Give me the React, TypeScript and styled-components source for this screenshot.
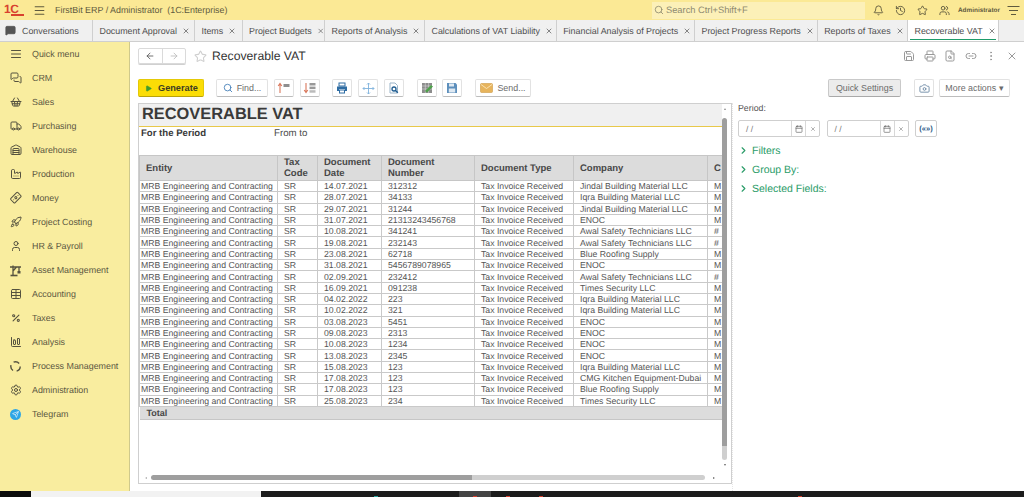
import { ReactNode } from "react";
import styled, { createGlobalStyle } from "styled-components";
import {
    AlignJustify,
    ArrowLeft,
    ArrowRight,
    Banknote,
    Bell,
    Calendar,
    Camera,
    ChartColumnBig,
    ChevronRight,
    Factory,
    FileSearch,
    History,
    Link2,
    Menu,
    MessageSquare,
    MessagesSquare,
    MoreVertical,
    Percent,
    Play,
    Printer,
    Rocket,
    Save,
    Search,
    Send,
    Settings,
    ShoppingBasket,
    Star,
    Table,
    Truck,
    User,
    Users,
    Warehouse,
    X,
} from "lucide-react";

const GlobalStyle = createGlobalStyle`
    html, body {
        margin: 0;
        padding: 0;
        background: #fff;
    }
    body {
        font-family: "Liberation Sans", Arial, sans-serif;
        color: #4b4b4b;
        text-rendering: geometricPrecision;
    }
    * {
        box-sizing: border-box;
    }
`;

const Page = styled.div`
    display: flex;
    flex-direction: column;
    width: 1024px;
    height: 497px;
    overflow: hidden;
`;

const Header = styled.header`
    display: flex;
    align-items: center;
    height: 20px;
    flex: none;
    background: #fbe995;
    color: #5f5a3e;
`;

const LogoText = styled.span`
    position: relative;
    width: 20px;
    height: 12px;
    margin: 0 4px;
    font-size: 12px;
    font-weight: 700;
    line-height: 10px;
    letter-spacing: -0.5px;
    color: #d8412f;

    &::after {
        content: "";
        position: absolute;
        left: 7px;
        right: 0;
        bottom: 0;
        height: 2px;
        background: #d8412f;
    }
`;

const HeaderIcon = styled.span<{ $left?: number }>`
    display: flex;
    align-items: center;
    justify-content: center;
    width: 22px;
    margin-left: ${(p) => p.$left ?? 0}px;
    color: #5f5a3e;
`;

const AppName = styled.span`
    width: 597px;
    margin-left: 5px;
    font-size: 8.9px;
`;

const SearchBox = styled.div`
    display: flex;
    align-items: center;
    gap: 2px;
    width: 213px;
    height: 17px;
    padding-left: 2px;
    background: #fcf0b8;
    font-size: 9.3px;
    color: #8e8a70;
`;

const UserName = styled.span`
    width: 41px;
    margin: 0 3px;
    font-size: 6.4px;
    font-weight: 700;
    white-space: nowrap;
`;

const TabBar = styled.nav`
    display: flex;
    height: 22px;
    flex: none;
    background: #f0f0f0;
    border-bottom: 1px solid #cfcfcf;
    overflow: hidden;
`;

const Tab = styled.div<{ $active?: boolean; $width: number }>`
    position: relative;
    display: flex;
    align-items: center;
    gap: 5px;
    flex: none;
    width: ${(p) => p.$width}px;
    padding-left: 6.5px;
    border-right: 1px solid #cfcfcf;
    background: ${(p) => (p.$active ? "#fff" : "#f0f0f0")};
    font-size: 8.9px;
    white-space: nowrap;
    color: #4f4f4f;

    &::after {
        content: "";
        display: ${(p) => (p.$active ? "block" : "none")};
        position: absolute;
        left: 2px;
        right: 2px;
        bottom: 1px;
        height: 1px;
        background: #1e9c6a;
    }
`;

const ConvTab = styled(Tab)`
    gap: 6px;
    padding-left: 5px;
`;

const Body = styled.div`
    display: flex;
    flex: 1;
    min-height: 0;
`;

const Sidebar = styled.aside`
    display: flex;
    flex-direction: column;
    width: 130px;
    flex: none;
    background: #f9ed9f;
    border-right: 1px solid #cfc98c;
`;

const SideItem = styled.div`
    display: flex;
    align-items: center;
    height: 24px;
    padding-left: 9px;
    gap: 10px;
    font-size: 8.9px;
    color: #5b5741;
`;

const SideIcon = styled.span<{ $tilt?: boolean }>`
    display: flex;
    justify-content: center;
    width: 13px;
    color: #55523f;
    transform: ${(p) => (p.$tilt ? "rotate(-45deg)" : "none")};
`;

const TelegramDot = styled.span`
    display: flex;
    align-items: center;
    justify-content: center;
    width: 11px;
    height: 11px;
    border-radius: 50%;
    background: #2ea6e6;
    color: #fff;
`;

const Main = styled.main`
    display: flex;
    flex-direction: column;
    flex: 1;
    min-width: 0;
    padding: 6px 0 0 8px;
`;

const TitleRow = styled.div`
    display: flex;
    align-items: center;
    height: 16px;
`;

const NavGroup = styled.div`
    display: flex;
    width: 48px;
    height: 16px;
    border: 1px solid #dadada;
    border-radius: 2px;
    box-shadow: 0 1px 0 #d0d0d0;
`;

const NavCell = styled.span<{ $muted?: boolean }>`
    display: flex;
    flex: 1;
    align-items: center;
    justify-content: center;
    color: ${(p) => (p.$muted ? "#b9b9b9" : "#555")};

    & + & {
        border-left: 1px solid #dadada;
    }
`;

const FavStar = styled.span`
    display: flex;
    margin: 0 5px 0 8px;
    color: #cfcfcf;
`;

const Title = styled.h1`
    width: 691px;
    margin: 0;
    font-size: 12.2px;
    font-weight: 400;
    color: #333;
`;

const TitleTools = styled.div`
    display: flex;
    align-items: center;
    gap: 8.5px;
    color: #999;
`;

const Toolbar = styled.div`
    display: flex;
    align-items: center;
    height: 18px;
    flex: none;
    margin-top: 15px;
    padding-right: 14px;
`;

const Btn = styled.button<{ $width: number; $left?: number }>`
    display: flex;
    align-items: center;
    justify-content: center;
    gap: 4px;
    flex: none;
    width: ${(p) => p.$width}px;
    height: 18px;
    margin: 0 0 0 ${(p) => p.$left ?? 6}px;
    padding: 0;
    border: 1px solid #e2e2e2;
    border-bottom-color: #bdbdbd;
    border-radius: 2px;
    background: #fff;
    font-family: inherit;
    font-size: 8.9px;
    color: #6b6b6b;
`;

const GenerateBtn = styled(Btn)`
    justify-content: flex-start;
    gap: 6px;
    padding-left: 6px;
    background: #fbdd06;
    border-color: #e4c908;
    border-bottom-color: #b9a20a;
    font-size: 9.2px;
    font-weight: 700;
    color: #3d3d22;
`;

const QuickBtn = styled(Btn)`
    background: #ececec;
    border-color: #c9c9c9;
    border-bottom-color: #a9a9a9;
`;

const Spacer = styled.div`
    flex: 1;
`;

const Workspace = styled.div`
    display: flex;
    flex: 1;
    min-height: 0;
    margin-top: 6px;
`;

const Report = styled.section`
    display: flex;
    flex-direction: column;
    flex: none;
    width: 594px;
    height: 381px;
    border: 1px solid #cfcfcf;
`;

const ReportMain = styled.div`
    display: flex;
    flex: 1;
    min-height: 0;
`;

const Sheet = styled.div`
    width: 583px;
    flex: none;
    overflow: hidden;
`;

const SheetTitle = styled.div`
    height: 23px;
    padding-left: 3px;
    background: #f0f0f0;
    border-bottom: 1px solid #e8c84a;
    font-size: 16.4px;
    line-height: 21px;
    font-weight: 700;
    color: #3a3a3a;
`;

const PeriodRow = styled.div`
    display: flex;
    align-items: center;
    height: 28px;
    padding: 0 0 16px 2px;
    font-size: 9.7px;
`;

const PeriodLabel = styled.b`
    width: 133px;
    font-size: 9.6px;
    color: #3a3a3a;
`;

const DataTable = styled.table`
    table-layout: fixed;
    width: 583px;
    border-collapse: collapse;
    font-size: 8.7px;
`;

const HeadCell = styled.th`
    height: 25px;
    padding: 0 12px 0 6px;
    background: #dcdcdc;
    border: 1px solid #c6c6c6;
    text-align: left;
    font-size: 9.5px;
    line-height: 11px;
    font-weight: 700;
    color: #484848;
`;

const Cell = styled.td`
    height: 11.3px;
    padding: 0 0 0 6px;
    border: 1px solid #c9c9c9;
    line-height: 10px;
    white-space: nowrap;
    overflow: hidden;
    color: #555;
`;

const EntityCell = styled(Cell)`
    padding-left: 1px;
`;

const TotalCell = styled.td`
    height: 13px;
    padding: 0 0 0 7px;
    background: #dcdcdc;
    border-bottom: 1px solid #c6c6c6;
    font-size: 9px;
    font-weight: 700;
    line-height: 10px;
    color: #484848;
`;

const VTrack = styled.div`
    display: flex;
    flex-direction: column;
    align-items: center;
    width: 5px;
    flex: none;
    padding-top: 4px;
`;

const VBar = styled.div`
    width: 5px;
    height: 342px;
    margin: 8px 0 4px;
    border-radius: 3px;
    background: linear-gradient(#9e9e9e 0, #9e9e9e 96%, #cfcfcf 96%, #cfcfcf 100%);
`;

const HTrack = styled.div`
    display: flex;
    align-items: center;
    gap: 4px;
    height: 9px;
    flex: none;
    padding: 0 0 2px 6px;
`;

const HBar = styled.div`
    width: 554px;
    height: 5px;
    border-radius: 3px;
    background: linear-gradient(90deg, #9e9e9e 0, #9e9e9e 58%, #cfcfcf 58%, #cfcfcf 100%);
`;

const ArrowUp = styled.span`
    flex: none;
    border-left: 1.5px solid transparent;
    border-right: 1.5px solid transparent;
    border-bottom: 2px solid #8a8a8a;
`;

const ArrowDown = styled.span`
    flex: none;
    border-left: 1.5px solid transparent;
    border-right: 1.5px solid transparent;
    border-top: 2px solid #666;
`;

const ArrowBack = styled.span`
    flex: none;
    border-top: 1.5px solid transparent;
    border-bottom: 1.5px solid transparent;
    border-right: 2px solid #aaa;
`;

const ArrowForward = styled.span`
    flex: none;
    margin-left: 4px;
    border-top: 1.5px solid transparent;
    border-bottom: 1.5px solid transparent;
    border-left: 2px solid #666;
`;

const FilterPane = styled.aside`
    flex: 1;
    padding-left: 5px;
    border-left: 1px dotted #e6e6e6;
`;

const PeriodCaption = styled.div`
    height: 17px;
    font-size: 8.8px;
    line-height: 11px;
    color: #555;
`;

const DateRow = styled.div`
    display: flex;
    align-items: center;
    gap: 6.5px;
`;

const DateField = styled.div`
    display: flex;
    align-items: center;
    width: 82px;
    height: 17px;
    border: 1px solid #cfcfcf;
    border-radius: 2px;
    font-size: 8.5px;
    color: #777;
`;

const DateValue = styled.span`
    flex: 1;
    padding-left: 7px;
`;

const DateCell = styled.span`
    display: flex;
    align-items: center;
    justify-content: center;
    width: 14px;
    height: 100%;
    border-left: 1px solid #d8d8d8;
    color: #666;
`;

const PeriodBtn = styled.div`
    width: 22px;
    height: 17px;
    border: 1px solid #cfcfcf;
    border-radius: 2px;
    text-align: center;
    font-size: 7.5px;
    font-weight: 700;
    line-height: 15px;
    color: #2c5a86;
`;

const Section = styled.div`
    display: flex;
    align-items: center;
    height: 19px;
    gap: 3px;
    font-size: 10.5px;
    color: #2a9c68;
`;

const SectionList = styled.div`
    margin-top: 4px;
`;

const Taskbar = styled.footer`
    display: flex;
    height: 6px;
    flex: none;
    background: #1c1c1c;
    overflow: hidden;
`;

const TaskStart = styled.div`
    width: 31px;
    background: #0c0c0c;
`;

const TaskSearch = styled.div`
    width: 230px;
    background: #f2f2f2;
`;

const TaskDot = styled.span<{ $left: number; $color: string }>`
    align-self: flex-end;
    width: 4px;
    height: 1px;
    margin-left: ${(p) => p.$left}px;
    background: ${(p) => p.$color};
`;

const TaskActive = styled.div`
    display: flex;
    justify-content: center;
    width: 32px;
    margin-left: 81px;
    background: #444;
`;

const TaskClock = styled.div`
    margin-left: 148px;
    padding-top: 4px;
    font-size: 8.5px;
    line-height: 10px;
    white-space: nowrap;
    color: #eee;
`;

function SortUpIcon() {
    return (
        <svg width="14" height="12" viewBox="0 0 14 12">
            <path d="M3 11V2M1.2 4 3 1.5 4.8 4" fill="none" stroke="#d9785c" strokeWidth="1.1" />
            <rect x="6.5" y="2" width="6" height="3" fill="#8f8f8f" />
        </svg>
    );
}

function SortDownIcon() {
    return (
        <svg width="14" height="12" viewBox="0 0 14 12">
            <path d="M3 1v9M1.2 8 3 10.5 4.8 8" fill="none" stroke="#d9785c" strokeWidth="1.1" />
            <rect x="6.5" y="1" width="6" height="2.5" fill="#999" />
            <rect x="6.5" y="4.6" width="6" height="2.5" fill="#999" />
            <rect x="6.5" y="8.2" width="6" height="2.5" fill="#bbb" />
        </svg>
    );
}

function PrintIcon() {
    return (
        <svg width="12" height="12" viewBox="0 0 12 12">
            <rect x="3" y="1" width="6" height="3" fill="none" stroke="#2f6da3" />
            <path d="M1 4.5h10V9H9V7H3v2H1z" fill="#2f6da3" />
            <rect x="3.5" y="8" width="5" height="3" fill="none" stroke="#2f6da3" />
        </svg>
    );
}

function MoveIcon() {
    return (
        <svg width="13" height="13" viewBox="0 0 13 13" fill="none" stroke="#7fb2dc" strokeWidth="0.9">
            <path d="M6.5 1v11M1 6.5h11" />
            <path d="M5 2.5 6.5 1 8 2.5M5 10.5 6.5 12 8 10.5M2.5 5 1 6.5 2.5 8M10.5 5 12 6.5 10.5 8" />
        </svg>
    );
}

function PreviewIcon() {
    return (
        <svg width="12" height="12" viewBox="0 0 12 12" fill="none">
            <path d="M2 1h5l2.5 2.5V11H2z" stroke="#9bb4c9" />
            <circle cx="6" cy="7" r="2" stroke="#1f5d91" strokeWidth="1.3" />
            <path d="m7.5 8.5 2.3 2.3" stroke="#1f5d91" strokeWidth="1.4" />
        </svg>
    );
}

function TableEditIcon() {
    return (
        <svg width="13" height="12" viewBox="0 0 13 12">
            <rect x="1" y="1" width="10" height="10" fill="#8c8c8c" />
            <path d="M1 4h10M1 7h10M4.3 1v10M7.6 1v10" stroke="#d8d8d8" strokeWidth="0.6" />
            <path d="m4 9 6-6 2 1.5-6 6z" fill="#4ea24a" />
        </svg>
    );
}

function FloppyIcon() {
    return (
        <svg width="12" height="12" viewBox="0 0 12 12">
            <path d="M1 1h8.5L11 2.5V11H1z" fill="#5d8fbc" />
            <rect x="3" y="1.5" width="5" height="3" fill="#dfe9f2" />
            <rect x="2.8" y="6.5" width="6.4" height="4" fill="#dfe9f2" />
        </svg>
    );
}

function EnvelopeIcon() {
    return (
        <svg width="13" height="10" viewBox="0 0 13 10">
            <rect x="0.5" y="0.5" width="12" height="9" rx="1" fill="#e7b45c" stroke="#cf9a45" strokeWidth="0.6" />
            <path d="m1 1.5 5.5 4 5.5-4" fill="none" stroke="#fbe6bd" strokeWidth="0.9" />
        </svg>
    );
}

function MenuLines() {
    return (
        <svg width="13" height="11" viewBox="0 0 13 11" stroke="#5f5a3e" strokeWidth="1.1">
            <path d="M0.5 1.5h12M2 5.5h9M4 9.5h5" />
        </svg>
    );
}

function CraneIcon() {
    return (
        <svg width="13" height="13" viewBox="0 0 13 13" fill="none" stroke="#55523f" strokeWidth="1.3">
            <path d="M1 3h11M4 1.5V11M7.5 3 4 7M10 3v4" />
            <path d="M1.5 11.5h7" strokeWidth="1.6" />
            <rect x="8.5" y="7" width="3" height="2.5" fill="#55523f" stroke="none" />
        </svg>
    );
}

function LoopIcon() {
    return (
        <svg width="13" height="13" viewBox="0 0 13 13" fill="none" stroke="#55523f" strokeWidth="1.4">
            <circle cx="6.5" cy="6.5" r="4.7" strokeDasharray="6 3.8" />
        </svg>
    );
}

const menuItems: { label: string; icon: ReactNode; tilt?: boolean }[] = [
    { label: "Quick menu", icon: <AlignJustify size={12} /> },
    { label: "CRM", icon: <MessagesSquare size={12} /> },
    { label: "Sales", icon: <ShoppingBasket size={12} /> },
    { label: "Purchasing", icon: <Truck size={12} /> },
    { label: "Warehouse", icon: <Warehouse size={12} /> },
    { label: "Production", icon: <Factory size={12} /> },
    { label: "Money", icon: <Banknote size={12} />, tilt: true },
    { label: "Project Costing", icon: <Rocket size={12} /> },
    { label: "HR & Payroll", icon: <User size={12} /> },
    { label: "Asset Management", icon: <CraneIcon /> },
    { label: "Accounting", icon: <Table size={12} /> },
    { label: "Taxes", icon: <Percent size={10} strokeWidth={2.6} /> },
    { label: "Analysis", icon: <ChartColumnBig size={12} /> },
    { label: "Process Management", icon: <LoopIcon /> },
    { label: "Administration", icon: <Settings size={12} /> },
    {
        label: "Telegram",
        icon: (
            <TelegramDot>
                <Send size={7} />
            </TelegramDot>
        ),
    },
];

const tabs = [
    { label: "Document Approval", width: 102 },
    { label: "Items", width: 47.5 },
    { label: "Project Budgets", width: 82.5 },
    { label: "Reports of Analysis", width: 100 },
    { label: "Calculations of VAT Liability", width: 131.7 },
    { label: "Financial Analysis of Projects", width: 138.3 },
    { label: "Project Progress Reports", width: 122.7 },
    { label: "Reports of Taxes", width: 90.3 },
    { label: "Recoverable VAT", width: 91, active: true },
];

const rows = [
    ["14.07.2021", "312312", "Jindal Building Material LLC", "M"],
    ["28.07.2021", "34133", "Iqra Building Material LLC", "M"],
    ["29.07.2021", "31244", "Jindal Building Material LLC", "M"],
    ["31.07.2021", "21313243456768", "ENOC", "M"],
    ["10.08.2021", "341241", "Awal Safety Technicians LLC", "#"],
    ["19.08.2021", "232143", "Awal Safety Technicians LLC", "#"],
    ["23.08.2021", "62718", "Blue Roofing Supply", "M"],
    ["31.08.2021", "5456789078965", "ENOC", "M"],
    ["02.09.2021", "232412", "Awal Safety Technicians LLC", "#"],
    ["16.09.2021", "091238", "Times Security LLC", "M"],
    ["04.02.2022", "223", "Iqra Building Material LLC", "M"],
    ["10.02.2022", "321", "Iqra Building Material LLC", "M"],
    ["03.08.2023", "5451", "ENOC", "M"],
    ["09.08.2023", "2313", "ENOC", "M"],
    ["10.08.2023", "1234", "ENOC", "M"],
    ["13.08.2023", "2345", "ENOC", "M"],
    ["15.08.2023", "123", "Iqra Building Material LLC", "M"],
    ["17.08.2023", "123", "CMG Kitchen Equipment-Dubai", "M"],
    ["17.08.2023", "123", "Blue Roofing Supply", "M"],
    ["25.08.2023", "234", "Times Security LLC", "M"],
];

const columnWidths = [138, 40, 64, 93, 99, 134, 15];

function App() {
    return (
        <Page>
            <GlobalStyle />
            <Header>
                <LogoText>1C</LogoText>
                <HeaderIcon>
                    <Menu size={13} />
                </HeaderIcon>
                <AppName>FirstBit ERP / Administrator&nbsp; (1C:Enterprise)</AppName>
                <SearchBox>
                    <Search size={10} />
                    Search Ctrl+Shift+F
                </SearchBox>
                <HeaderIcon $left={2}>
                    <Bell size={11} />
                </HeaderIcon>
                <HeaderIcon>
                    <History size={11} />
                </HeaderIcon>
                <HeaderIcon>
                    <Star size={11} />
                </HeaderIcon>
                <HeaderIcon>
                    <Users size={11} />
                </HeaderIcon>
                <UserName>Administrator</UserName>
                <HeaderIcon>
                    <MenuLines />
                </HeaderIcon>
            </Header>
            <TabBar>
                <ConvTab $width={93}>
                    <MessageSquare size={11} fill="#555" color="#555" />
                    Conversations
                </ConvTab>
                {tabs.map((tab) => (
                    <Tab key={tab.label} $width={tab.width} $active={tab.active}>
                        {tab.label}
                        <X size={8} />
                    </Tab>
                ))}
            </TabBar>
            <Body>
                <Sidebar>
                    {menuItems.map((item) => (
                        <SideItem key={item.label}>
                            <SideIcon $tilt={item.tilt}>{item.icon}</SideIcon>
                            {item.label}
                        </SideItem>
                    ))}
                </Sidebar>
                <Main>
                    <TitleRow>
                        <NavGroup>
                            <NavCell>
                                <ArrowLeft size={10} />
                            </NavCell>
                            <NavCell $muted>
                                <ArrowRight size={10} />
                            </NavCell>
                        </NavGroup>
                        <FavStar>
                            <Star size={13} />
                        </FavStar>
                        <Title>Recoverable VAT</Title>
                        <TitleTools>
                            <Save size={12} />
                            <Printer size={12} />
                            <FileSearch size={12} />
                            <Link2 size={12} />
                            <MoreVertical size={12} />
                            <X size={12} />
                        </TitleTools>
                    </TitleRow>
                    <Toolbar>
                        <GenerateBtn $width={66} $left={0}>
                            <Play size={7} fill="#3f9b2f" color="#3f9b2f" />
                            Generate
                        </GenerateBtn>
                        <Btn $width={52} $left={12}>
                            <Search size={10} color="#3b78b5" />
                            Find...
                        </Btn>
                        <Btn $width={20}>
                            <SortUpIcon />
                        </Btn>
                        <Btn $width={20}>
                            <SortDownIcon />
                        </Btn>
                        <Btn $width={20} $left={12}>
                            <PrintIcon />
                        </Btn>
                        <Btn $width={20}>
                            <MoveIcon />
                        </Btn>
                        <Btn $width={20}>
                            <PreviewIcon />
                        </Btn>
                        <Btn $width={20} $left={13}>
                            <TableEditIcon />
                        </Btn>
                        <Btn $width={20} $left={5}>
                            <FloppyIcon />
                        </Btn>
                        <Btn $width={56} $left={13}>
                            <EnvelopeIcon />
                            Send...
                        </Btn>
                        <Spacer />
                        <QuickBtn $width={73}>Quick Settings</QuickBtn>
                        <Btn $width={20} $left={13}>
                            <Camera size={11} color="#6d8aa5" />
                        </Btn>
                        <Btn $width={71} $left={5}>
                            More actions ▾
                        </Btn>
                    </Toolbar>
                    <Workspace>
                        <Report>
                            <ReportMain>
                                <Sheet>
                                    <SheetTitle>RECOVERABLE VAT</SheetTitle>
                                    <PeriodRow>
                                        <PeriodLabel>For the Period</PeriodLabel>
                                        From to
                                    </PeriodRow>
                                    <DataTable>
                                        <colgroup>
                                            {columnWidths.map((w, i) => (
                                                <col key={i} width={w} />
                                            ))}
                                        </colgroup>
                                        <thead>
                                            <tr>
                                                <HeadCell>Entity</HeadCell>
                                                <HeadCell>Tax Code</HeadCell>
                                                <HeadCell>Document Date</HeadCell>
                                                <HeadCell>Document Number</HeadCell>
                                                <HeadCell>Document Type</HeadCell>
                                                <HeadCell>Company</HeadCell>
                                                <HeadCell>C</HeadCell>
                                            </tr>
                                        </thead>
                                        <tbody>
                                            {rows.map((r, i) => (
                                                <tr key={i}>
                                                    <EntityCell>MRB Engineering and Contracting</EntityCell>
                                                    <Cell>SR</Cell>
                                                    <Cell>{r[0]}</Cell>
                                                    <Cell>{r[1]}</Cell>
                                                    <Cell>Tax Invoice Received</Cell>
                                                    <Cell>{r[2]}</Cell>
                                                    <Cell>{r[3]}</Cell>
                                                </tr>
                                            ))}
                                            <tr>
                                                <TotalCell colSpan={7}>Total</TotalCell>
                                            </tr>
                                        </tbody>
                                    </DataTable>
                                </Sheet>
                                <VTrack>
                                    <ArrowUp />
                                    <VBar />
                                    <ArrowDown />
                                </VTrack>
                            </ReportMain>
                            <HTrack>
                                <ArrowBack />
                                <HBar />
                                <ArrowForward />
                            </HTrack>
                        </Report>
                        <FilterPane>
                            <PeriodCaption>Period:</PeriodCaption>
                            <DateRow>
                                <DateField>
                                    <DateValue>/ /</DateValue>
                                    <DateCell>
                                        <Calendar size={8} />
                                    </DateCell>
                                    <DateCell>
                                        <X size={6} />
                                    </DateCell>
                                </DateField>
                                <DateField>
                                    <DateValue>/ /</DateValue>
                                    <DateCell>
                                        <Calendar size={8} />
                                    </DateCell>
                                    <DateCell>
                                        <X size={6} />
                                    </DateCell>
                                </DateField>
                                <PeriodBtn>(«»)</PeriodBtn>
                            </DateRow>
                            <SectionList>
                                <Section>
                                    <ChevronRight size={11} strokeWidth={2.5} />
                                    Filters
                                </Section>
                                <Section>
                                    <ChevronRight size={11} strokeWidth={2.5} />
                                    Group By:
                                </Section>
                                <Section>
                                    <ChevronRight size={11} strokeWidth={2.5} />
                                    Selected Fields:
                                </Section>
                            </SectionList>
                        </FilterPane>
                    </Workspace>
                </Main>
            </Body>
            <Taskbar>
                <TaskStart />
                <TaskSearch />
                <TaskDot $left={113} $color="#2aa6a0" />
                <TaskActive>
                    <TaskDot $left={0} $color="#d8412f" />
                </TaskActive>
                <TaskDot $left={15} $color="#d8412f" />
                <TaskDot $left={29} $color="#d8412f" />
                <TaskDot $left={255} $color="#d8412f" />
                <TaskClock>11:43 AM</TaskClock>
            </Taskbar>
        </Page>
    );
}

export default App;
